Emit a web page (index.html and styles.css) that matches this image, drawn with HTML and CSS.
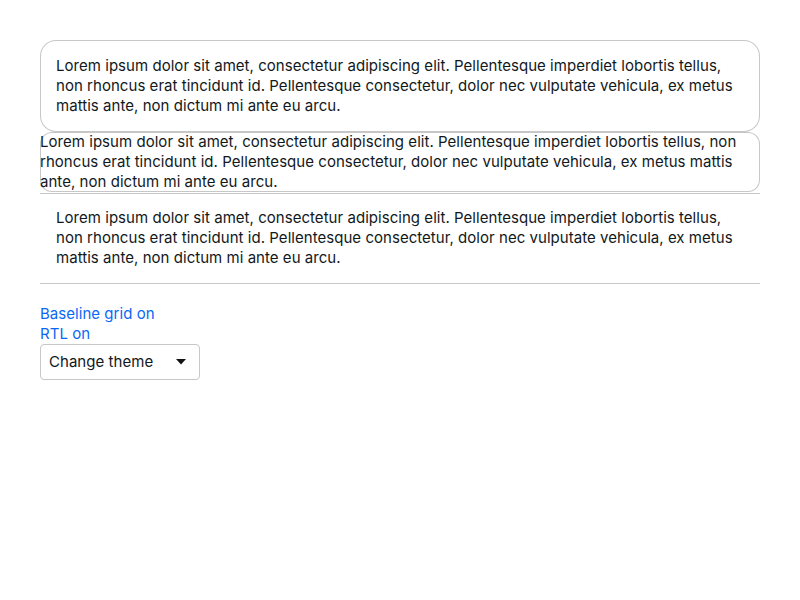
FILE: index.html
```html
<!DOCTYPE html>
<html>
<head><link rel="stylesheet" href="styles.css"></head>
<body>
<main class="page">
  <div class="card card-rounded">Lorem ipsum dolor sit amet, consectetur adipiscing elit. Pellentesque imperdiet lobortis tellus, non rhoncus erat tincidunt id. Pellentesque consectetur, dolor nec vulputate vehicula, ex metus mattis ante, non dictum mi ante eu arcu.</div>
  <div class="card card-bare">Lorem ipsum dolor sit amet, consectetur adipiscing elit. Pellentesque imperdiet lobortis tellus, non rhoncus erat tincidunt id. Pellentesque consectetur, dolor nec vulputate vehicula, ex metus mattis ante, non dictum mi ante eu arcu.</div>
  <div class="card card-lines">Lorem ipsum dolor sit amet, consectetur adipiscing elit. Pellentesque imperdiet lobortis tellus, non rhoncus erat tincidunt id. Pellentesque consectetur, dolor nec vulputate vehicula, ex metus mattis ante, non dictum mi ante eu arcu.</div>
  <div class="controls">
    <a class="toggle" href="#">Baseline grid on</a>
    <a class="toggle" href="#">RTL on</a>
    <div class="select">
      <span>Change theme</span>
      <svg class="caret" width="10" height="6" viewBox="0 0 10 6"><path d="M0 0h10L5 5.5z" fill="#111"/></svg>
    </div>
  </div>
</main>
</body>
</html>
```
FILE: styles.css
```css
html, body { margin: 0; padding: 0; background: #fff; }
body {
  font-family: "Inter", "Liberation Sans", sans-serif;
  font-size: 15px;
  line-height: 20px;
  color: #111820;
  letter-spacing: 0.04px;
}
.page { padding: 40px; display: flex; flex-direction: column; }
.card { box-sizing: border-box; }
.card-rounded {
  padding: 16px;
  border-radius: 16px;
  box-shadow: inset 0 0 0 1px #c7c7c7;
}
.card-bare {
  padding: 0;
  border-radius: 12px;
  box-shadow: inset 0 0 0 1px #c7c7c7;
}
.card-lines {
  margin-top: 1px;
  padding: 15px 16px 16px;
  box-shadow: inset 0 1px 0 #c7c7c7, inset 0 -1px 0 #c7c7c7;
}
.controls { margin-top: 20px; display: flex; flex-direction: column; align-items: flex-start; }
.toggle { color: #0968f6; text-decoration: none; }
.select {
  box-sizing: border-box;
  width: 160px;
  height: 36px;
  border: 1px solid #c7c7c7;
  border-radius: 4px;
  display: flex;
  align-items: center;
  justify-content: space-between;
  padding: 0 13px 0 8px;
}
.caret { display: block; }
```
